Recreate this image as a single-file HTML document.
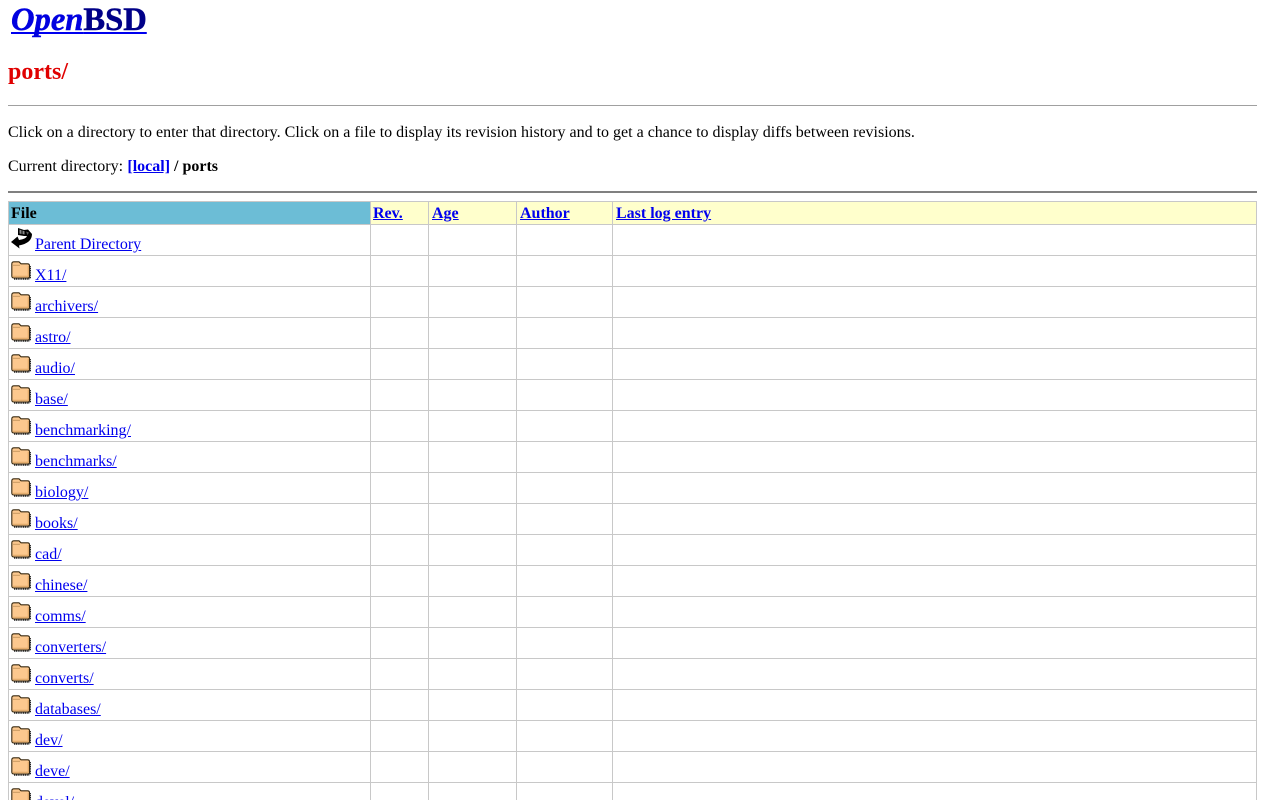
<!DOCTYPE html>
<html>
<head>
<meta charset="utf-8">
<title>ports/</title>
<style>
html,body{margin:0;padding:0;background:#fff;overflow:hidden;height:800px}
body{font-family:"Liberation Serif",serif;font-size:16px;color:#000;position:relative;width:1263px}
a{color:#0000ee;text-decoration:underline}
.abs{position:absolute;white-space:nowrap}
.logo{left:11px;top:2px;font-size:32.6px;line-height:36px;font-weight:bold;width:136px}
.logo a{display:block;text-decoration-thickness:2px;text-underline-offset:2px;text-decoration-skip-ink:none;text-decoration-color:#0000ee}
.logo i{color:#0000e0;-webkit-text-stroke:.5px #0000e0}
.logo span{color:#000088;-webkit-text-stroke:.5px #000088}
h2{margin:0;left:8px;top:58px;font-size:24px;line-height:28px;color:#e00000}
.hr{position:absolute;left:8px;width:1249px}
table{position:absolute;left:8px;top:201px;width:1249px;table-layout:fixed;border-collapse:collapse}
td,th{border:1px solid #c8c8c8;padding:0 2px;text-align:left;vertical-align:top;line-height:18px}
th{padding-top:3px;padding-bottom:0;box-sizing:border-box;height:23px;background:#ffffcc}
th.s{background:#6cbdd6}
th.m a{margin-left:1px}
td{height:31px;box-sizing:border-box;padding-top:11px;position:relative}
td a{margin-left:24px}
td svg{position:absolute;left:2px;top:5px}
td svg.bk{top:3px}
</style>
</head>
<body>
<svg width="0" height="0" style="position:absolute">
<defs>
<symbol id="f" viewBox="0 0 20 20">
<path d="M.8 3Q.8 .8 3 .8H8L10 2.800H16.500Q18.500 2.800 18.500 4.800V15.500Q18.500 17 16.500 17H3Q.8 17 .8 15Z" fill="#fcc88e" stroke="#3a2a10" stroke-width="1.100"/>
<path d="M2 4.300H9" stroke="#c89860" stroke-width="1" fill="none"/>
<path d="M2 15.300H17.300V5" stroke="#e0a868" stroke-width="1.200" fill="none"/>
<path d="M3 18H17.500L19.300 16.500V5" stroke="#222" stroke-width="1.500" stroke-dasharray="1.200 .6" fill="none"/>
</symbol>
<symbol id="b" viewBox="0 0 21 21">
<path d="M7 0L13 2L17 1.500L21 6Q21 15 8 17.500L8.500 20.500L0 14L6.500 8.500L8 12Q15 11 16 8L13 8L7 7Z" fill="#000"/>
<path d="M8.500 1.500L10.500 2.200V6L8.500 5.500ZM11.500 2.500L13.500 3.200V6.500L11.500 6Z" fill="#888"/>
<path d="M15 3.500L18 4.500L16.500 7Z" fill="#555"/>
</symbol>
</defs>
</svg>

<div class="abs logo"><a href="#"><i>Open</i><span>BSD</span></a></div>
<h2 class="abs">ports/</h2>
<div class="hr" style="top:105px;height:1px;background:#a0a0a0"></div>
<div class="abs" style="left:8px;top:124px;line-height:18px">Click on a directory to enter that directory. Click on a file to display its revision history and to get a chance to display diffs between revisions.</div>
<div class="abs" style="left:8px;top:158px;line-height:18px">Current directory: <b><a href="#" style="margin-left:.3px">[local]</a> / ports</b></div>
<div class="hr" style="top:191px;height:2px;background:#808080"></div>

<table>
<colgroup><col style="width:362px"><col style="width:58px"><col style="width:88px"><col style="width:96px"><col></colgroup>
<tr><th class="s">File</th><th><a href="#">Rev.</a></th><th class="m"><a href="#">Age</a></th><th class="m"><a href="#">Author</a></th><th class="m"><a href="#">Last log entry</a></th></tr>
<tr><td><svg class="bk" width="21" height="21"><use href="#b"/></svg><a href="#">Parent Directory</a></td><td></td><td></td><td></td><td></td></tr>
<tr><td><svg width="20" height="20"><use href="#f"/></svg><a href="#">X11/</a></td><td></td><td></td><td></td><td></td></tr>
<tr><td><svg width="20" height="20"><use href="#f"/></svg><a href="#">archivers/</a></td><td></td><td></td><td></td><td></td></tr>
<tr><td><svg width="20" height="20"><use href="#f"/></svg><a href="#">astro/</a></td><td></td><td></td><td></td><td></td></tr>
<tr><td><svg width="20" height="20"><use href="#f"/></svg><a href="#">audio/</a></td><td></td><td></td><td></td><td></td></tr>
<tr><td><svg width="20" height="20"><use href="#f"/></svg><a href="#">base/</a></td><td></td><td></td><td></td><td></td></tr>
<tr><td><svg width="20" height="20"><use href="#f"/></svg><a href="#">benchmarking/</a></td><td></td><td></td><td></td><td></td></tr>
<tr><td><svg width="20" height="20"><use href="#f"/></svg><a href="#">benchmarks/</a></td><td></td><td></td><td></td><td></td></tr>
<tr><td><svg width="20" height="20"><use href="#f"/></svg><a href="#">biology/</a></td><td></td><td></td><td></td><td></td></tr>
<tr><td><svg width="20" height="20"><use href="#f"/></svg><a href="#">books/</a></td><td></td><td></td><td></td><td></td></tr>
<tr><td><svg width="20" height="20"><use href="#f"/></svg><a href="#">cad/</a></td><td></td><td></td><td></td><td></td></tr>
<tr><td><svg width="20" height="20"><use href="#f"/></svg><a href="#">chinese/</a></td><td></td><td></td><td></td><td></td></tr>
<tr><td><svg width="20" height="20"><use href="#f"/></svg><a href="#">comms/</a></td><td></td><td></td><td></td><td></td></tr>
<tr><td><svg width="20" height="20"><use href="#f"/></svg><a href="#">converters/</a></td><td></td><td></td><td></td><td></td></tr>
<tr><td><svg width="20" height="20"><use href="#f"/></svg><a href="#">converts/</a></td><td></td><td></td><td></td><td></td></tr>
<tr><td><svg width="20" height="20"><use href="#f"/></svg><a href="#">databases/</a></td><td></td><td></td><td></td><td></td></tr>
<tr><td><svg width="20" height="20"><use href="#f"/></svg><a href="#">dev/</a></td><td></td><td></td><td></td><td></td></tr>
<tr><td><svg width="20" height="20"><use href="#f"/></svg><a href="#">deve/</a></td><td></td><td></td><td></td><td></td></tr>
<tr><td><svg width="20" height="20"><use href="#f"/></svg><a href="#">devel/</a></td><td></td><td></td><td></td><td></td></tr>
</table>
</body>
</html>
